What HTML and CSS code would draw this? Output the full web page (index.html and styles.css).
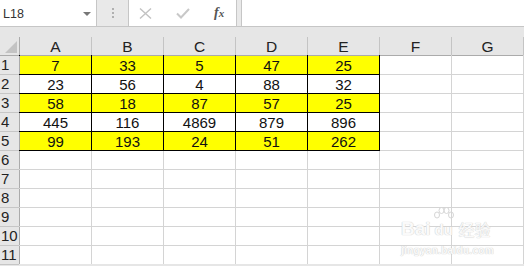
FILE: index.html
```html
<!DOCTYPE html>
<html lang="en">
<head>
    <meta charset="UTF-8">
    <meta name="viewport" content="width=device-width, initial-scale=1.0">
    <title>Book1 - Excel</title>
    <link rel="stylesheet" href="styles.css">
</head>
<body>
    <!-- name box + formula bar -->
    <div class="formula-bar">
        <div class="name-box">
            <span class="cell-ref">L18</span>
            <span class="drop"></span>
        </div>
        <div class="grip"><i></i><i></i><i></i></div>
        <div class="fx-box">
            <svg class="icon" width="13" height="11" viewBox="0 0 13 11">
                <path d="M1 0.5 L12 10.5 M12 0.5 L1 10.5" stroke="#c2c2c2" stroke-width="1.4" fill="none"/>
            </svg>
            <svg class="icon" width="14" height="11" viewBox="0 0 14 11">
                <path d="M1 5.5 L5 9.5 L13 1" stroke="#c8c8c8" stroke-width="2" fill="none"/>
            </svg>
            <span class="fx">f<span class="fx-x">x</span></span>
        </div>
        <div class="formula-input"></div>
    </div>
    <div class="bar-gap"></div>

    <div class="sheet">
        <div class="corner"><span class="corner-mark"></span></div>
        <div class="col-head">A</div>
        <div class="col-head">B</div>
        <div class="col-head">C</div>
        <div class="col-head">D</div>
        <div class="col-head">E</div>
        <div class="col-head">F</div>
        <div class="col-head">G</div>

        <div class="row-head">1</div>
        <div class="cell boxed yellow">7</div>
        <div class="cell boxed yellow">33</div>
        <div class="cell boxed yellow">5</div>
        <div class="cell boxed yellow">47</div>
        <div class="cell boxed yellow">25</div>
        <div class="cell"></div>
        <div class="cell"></div>

        <div class="row-head">2</div>
        <div class="cell boxed">23</div>
        <div class="cell boxed">56</div>
        <div class="cell boxed">4</div>
        <div class="cell boxed">88</div>
        <div class="cell boxed">32</div>
        <div class="cell"></div>
        <div class="cell"></div>

        <div class="row-head">3</div>
        <div class="cell boxed yellow">58</div>
        <div class="cell boxed yellow">18</div>
        <div class="cell boxed yellow">87</div>
        <div class="cell boxed yellow">57</div>
        <div class="cell boxed yellow">25</div>
        <div class="cell"></div>
        <div class="cell"></div>

        <div class="row-head">4</div>
        <div class="cell boxed">445</div>
        <div class="cell boxed">116</div>
        <div class="cell boxed">4869</div>
        <div class="cell boxed">879</div>
        <div class="cell boxed">896</div>
        <div class="cell"></div>
        <div class="cell"></div>

        <div class="row-head">5</div>
        <div class="cell boxed yellow">99</div>
        <div class="cell boxed yellow">193</div>
        <div class="cell boxed yellow">24</div>
        <div class="cell boxed yellow">51</div>
        <div class="cell boxed yellow">262</div>
        <div class="cell"></div>
        <div class="cell"></div>

        <div class="row-head">6</div>
        <div class="cell"></div><div class="cell"></div><div class="cell"></div><div class="cell"></div>
        <div class="cell"></div><div class="cell"></div><div class="cell"></div>

        <div class="row-head">7</div>
        <div class="cell"></div><div class="cell"></div><div class="cell"></div><div class="cell"></div>
        <div class="cell"></div><div class="cell"></div><div class="cell"></div>

        <div class="row-head">8</div>
        <div class="cell"></div><div class="cell"></div><div class="cell"></div><div class="cell"></div>
        <div class="cell"></div><div class="cell"></div><div class="cell"></div>

        <div class="row-head">9</div>
        <div class="cell"></div><div class="cell"></div><div class="cell"></div><div class="cell"></div>
        <div class="cell"></div><div class="cell"></div><div class="cell"></div>

        <div class="row-head">10</div>
        <div class="cell"></div><div class="cell"></div><div class="cell"></div><div class="cell"></div>
        <div class="cell"></div><div class="cell"></div><div class="cell"></div>

        <div class="row-head">11</div>
        <div class="cell"></div><div class="cell"></div><div class="cell"></div><div class="cell"></div>
        <div class="cell"></div><div class="cell"></div><div class="cell"></div>
    </div>

    <!-- faint site stamp in the lower right -->
    <div class="stamp">
        <div class="stamp-logo">
            <span class="stamp-bai">Bai</span>
            <span class="stamp-du">
                <svg class="paw" width="22" height="15" viewBox="0 0 22 15">
                    <g fill="none" stroke="#d6d6d6" stroke-width="1">
                        <ellipse cx="4" cy="8" rx="2.5" ry="3"/>
                        <ellipse cx="8.5" cy="3.5" rx="2.5" ry="3"/>
                        <ellipse cx="13.5" cy="3.5" rx="2.5" ry="3"/>
                        <ellipse cx="18" cy="8" rx="2.5" ry="3"/>
                    </g>
                </svg>
                du
            </span>
            <span class="stamp-cn">经验</span>
        </div>
        <div class="stamp-url">jingyan.baidu.com</div>
    </div>
</body>
</html>
```

FILE: styles.css
```css
body{
    margin: 0;
    width: 524px;
    height: 266px;
    overflow: hidden;
    background-color: #e6e6e6;
    font-family: "Liberation Sans", Arial, sans-serif;
    position: relative;
}

/* ---- formula bar ---- */
.formula-bar{
    display: flex;
    height: 26px;
    border-bottom: 1px solid #c6c6c6;
    background-color: #e9e9e9;
}
.name-box{
    width: 97px;
    background-color: white;
    border-right: 1px solid #c6c6c6;
    display: flex;
    align-items: center;
    justify-content: space-between;
    padding-left: 3px;
    box-sizing: border-box;
}
.cell-ref{
    font-size: 12.5px;
    color: #333;
    margin-top: 1px;
}
.drop{
    width: 0;
    height: 0;
    border-left: 4px solid transparent;
    border-right: 4px solid transparent;
    border-top: 4px solid #777;
    margin-right: 5px;
    margin-top: 1px;
}
.grip{
    width: 31px;
    display: flex;
    flex-direction: column;
    align-items: center;
    justify-content: center;
    gap: 2px;
}
.grip i{
    width: 2px;
    height: 2px;
    background-color: #b0b0b0;
}
.fx-box{
    width: 109px;
    box-sizing: border-box;
    background-color: white;
    border-left: 1px solid #c6c6c6;
    border-right: 1px solid #c6c6c6;
    display: flex;
    align-items: center;
    gap: 24px;
    padding-left: 10px;
}
.fx{
    font-family: "Liberation Serif", serif;
    font-style: italic;
    font-weight: bold;
    font-size: 14px;
    color: #555;
    margin-left: 0;
}
.fx-x{
    font-size: 11px;
}
.formula-input{
    flex: 1;
    margin-left: 4px;
    background-color: white;
    border-left: 1px solid #c6c6c6;
}
.bar-gap{
    height: 10px;
}

/* ---- sheet grid ---- */
.sheet{
    display: grid;
    grid-template-columns: 19px repeat(7, 71px);
    grid-auto-rows: 18px;
    gap: 1px;
    background-color: #d4d4d4;
    width: 524px;
    padding-right: 1px;
    font-size: 15px;
    line-height: 18px;
}
.corner, .col-head, .row-head{
    background-color: #e6e6e6;
    color: #222;
    position: relative;
    z-index: 1;
}
.col-head{
    text-align: center;
    font-size: 15.5px;
    line-height: 20px;
    box-shadow: 1px 0 0 #c4c4c4, 0 1px 0 #ababab;
}
.corner{
    box-shadow: 1px 0 0 #ababab, 0 1px 0 #ababab;
}
.corner-mark{
    position: absolute;
    right: 2px;
    bottom: 2px;
    width: 12px;
    height: 12px;
    background-color: #c3c3c3;
    clip-path: polygon(100% 0, 100% 100%, 0 100%);
}
.row-head{
    padding-left: 1px;
    box-shadow: 1px 0 0 #ababab, 0 1px 0 #c6c6c6;
}
.cell{
    background-color: white;
    text-align: center;
    color: #111;
    padding-top: 1px;
    box-sizing: border-box;
}
.boxed{
    box-shadow: 0 0 0 1px #000;
}
.yellow{
    background-color: #ffff00;
}

/* ---- stamp ---- */
.stamp{
    position: absolute;
    left: 401px;
    top: 207px;
    color: #fafafa;
    text-shadow: 0 0 1px #cfcfcf, 0 0 1px #cfcfcf;
    z-index: 2;
}
.stamp-logo{
    display: flex;
    align-items: flex-end;
    gap: 2px;
}
.stamp-bai{
    font-size: 19px;
    font-weight: bold;
    line-height: 18px;
}
.stamp-du{
    font-size: 15px;
    font-weight: bold;
    line-height: 16px;
    display: flex;
    flex-direction: column;
    align-items: center;
}
.stamp-cn{
    font-family: "Noto Sans CJK SC", sans-serif;
    font-size: 16px;
    line-height: 17px;
    margin-left: 2px;
}
.stamp-url{
    font-size: 10px;
    font-weight: bold;
    margin-top: 7px;
    letter-spacing: 0.3px;
}
```
